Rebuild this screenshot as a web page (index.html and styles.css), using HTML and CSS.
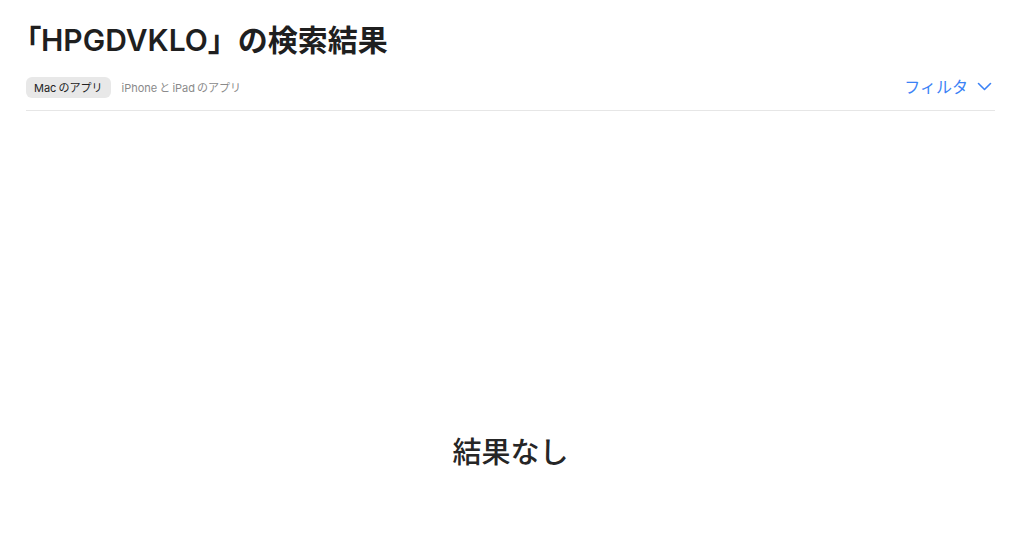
FILE: index.html
```html
<!DOCTYPE html>
<html lang="ja">
<head>
  <meta charset="UTF-8">
  <meta name="viewport" content="width=device-width, initial-scale=1.0">
  <title>検索結果</title>
  <link rel="stylesheet" href="styles.css">
</head>
<body>
  <!-- 見出し -->
  <h1 class="title"><span class="open">「</span>HPGDVKLO」の検索結果</h1>

  <!-- プラットフォーム切替とフィルタ -->
  <div class="toolbar">
    <div class="tabs">
      <button class="tab active">Mac のアプリ</button>
      <button class="tab">iPhone と iPad のアプリ</button>
    </div>
    <button class="filter">
      フィルタ
      <svg width="15" height="9" viewBox="0 0 15 9">
        <path d="M1.5 1.5 L7.5 7.5 L13.5 1.5" fill="none" stroke="currentColor" stroke-width="1.6" stroke-linecap="round" stroke-linejoin="round"/>
      </svg>
    </button>
  </div>

  <!-- 結果 -->
  <div class="empty">結果なし</div>
</body>
</html>
```

FILE: styles.css
```css
body {
  margin: 0;
  padding: 0 29px 0 26px;
  background: #fff;
  color: #222;
  font-family: Inter, "Noto Sans CJK JP", sans-serif;
}

.title {
  margin: 0;
  padding-top: 20px;
  font-size: 30px;
  font-weight: 600;
  line-height: 40px;
  color: #1f1f1f;
}
.title .open {
  font-feature-settings: "palt";
}

/* Toolbar */
.toolbar {
  display: flex;
  justify-content: space-between;
  align-items: center;
  margin-top: 14px;
  padding-bottom: 10px;
  border-bottom: 1px solid #e6e6e6;
}
.tabs {
  display: flex;
}
.tab {
  font-family: inherit;
  font-size: 11px;
  height: 21px;
  padding: 0 8px;
  border: none;
  border-radius: 6px;
  background: none;
  color: #8a8a8a;
  cursor: pointer;
  word-spacing: -1px;
}
.tab.active {
  background: #e8e8e8;
  color: #222;
  margin-right: 3px;
}
.filter {
  display: flex;
  align-items: center;
  gap: 9px;
  font-family: inherit;
  font-size: 16px;
  border: none;
  background: none;
  color: #3b82f6;
  padding: 0 3px 2px 0;
  cursor: pointer;
}

/* Empty state */
.empty {
  margin-top: 318px;
  text-align: center;
  font-size: 29px;
  font-weight: 500;
  color: #262626;
}
```
